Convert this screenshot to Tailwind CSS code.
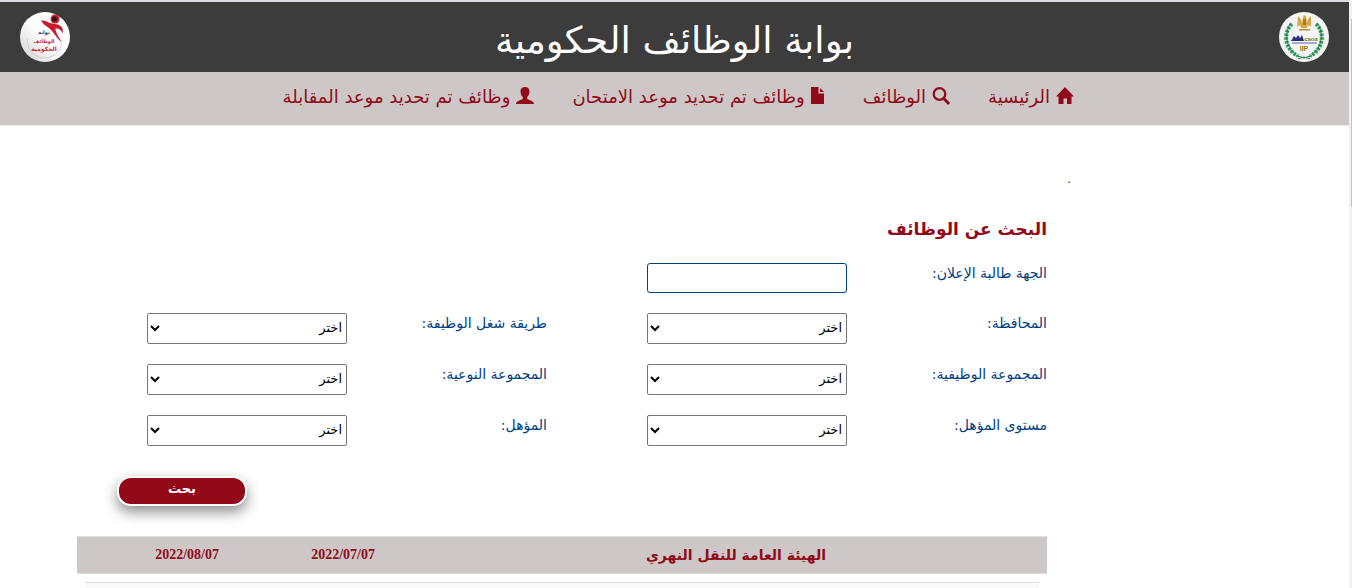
<!DOCTYPE html>
<html lang="ar" dir="rtl">
<head>
  <meta charset="UTF-8" />
  <meta name="viewport" content="width=device-width, initial-scale=1.0" />
  <title>بوابة الوظائف الحكومية</title>

  <!-- Tailwind CSS -->
  <script src="https://cdn.jsdelivr.net/npm/@tailwindcss/browser@4"></script>
</head>
<body class="bg-white font-['DejaVu_Sans',sans-serif] text-[#004080]">
<div dir="ltr" class="flex h-screen overflow-hidden">

<div dir="rtl" class="flex-1 min-w-0 h-screen overflow-hidden border-t-2 border-[#dadcdf]">

  <!-- Header -->
  <header class="flex h-[70px] items-center justify-between bg-[#3c3c3c] px-5">
    <a href="#" aria-label="CAOA">
      <svg class="size-[50px]" viewBox="0 0 50 50">
        <circle cx="25" cy="25" r="25" fill="#f6f5f6"/>
        <g fill="none" stroke="#2f9a5b" stroke-width="4" stroke-dasharray="2.5 1.2">
          <path d="M13 12C4 20 5 37 19 44"/>
          <path d="M37 12C46 20 45 37 31 44"/>
        </g>
        <path d="M12 11C5 20 6 37 20 45M38 11C45 20 44 37 30 45M19 47l6-2 6 2M19 44l6 2 6-2" fill="none" stroke="#178347" stroke-width="1"/>
        <path d="M19 4l3 3 1 4 1-6 1-2 2 1 1 7 1-4 3-3v11l-3-2-1 3h-6l-1-3-3 2z" fill="#d3a84c"/>
        <path d="M24 7h3v6h-3z" fill="#b17c22"/>
        <path d="M20 17h11v1.500H20z" fill="#bd8d36"/>
        <path d="M12 29l3-5 2 2 2-3 2 3 2-3 2 6z" fill="#27307f"/>
        <path d="M13 31h25" stroke="#8e91c1" stroke-width="1.500"/>
        <text x="32" y="29" text-anchor="middle" direction="ltr" font-family="Liberation Sans" font-weight="bold" font-size="6" fill="#817c22">caoa</text>
        <text x="25" y="39" text-anchor="middle" direction="ltr" font-family="Liberation Sans" font-weight="bold" font-size="7" fill="#817c22">IIP</text>
      </svg>
    </a>
    <h1 class="pt-2 text-[37px] leading-[48px] text-white">بوابة الوظائف الحكومية</h1>
    <a href="#" aria-label="بوابة الوظائف الحكومية">
      <svg class="size-[50px]" viewBox="0 0 50 50">
        <defs>
          <linearGradient id="disc" x1="1" y1="0" x2="0" y2="1">
            <stop offset="0.500" stop-color="#ffffff"/>
            <stop offset="1" stop-color="#cfcfcf"/>
          </linearGradient>
        </defs>
        <circle cx="25" cy="25" r="25" fill="url(#disc)"/>
        <path d="M7 27c1 24 31 25 35 4" fill="none" stroke="#c2c2c2" stroke-width="0.700"/>
        <circle cx="35" cy="7" r="4.500" fill="#c81c2c"/>
        <circle cx="34.500" cy="7" r="2.500" fill="#2a1416"/>
        <path d="M21 8.500c4-.500 7 2 11 3 4 .500 8 1 10 4 1 2 1 4 .500 6-1-3-3-5-7-5 0 5 4 9 6.500 14.500-4-4-7-8-10-12-3-4-8-5-11-10.500z" fill="#c81c2c"/>
        <g text-anchor="middle" font-family="DejaVu Sans" font-weight="bold">
          <text x="24" y="22" font-size="5" fill="#333333">بوابة</text>
          <text x="24" y="31" font-size="5" fill="#cf2334">الوظائف</text>
          <text x="24" y="39" font-size="6" fill="#cf2334">الحكومية</text>
        </g>
      </svg>
    </a>
  </header>

  <!-- Nav -->
  <nav class="flex h-[54px] items-start gap-[38px] border-b border-[#eeeeee] bg-[#cdc7c7] pt-[13px] pr-[275px] text-lg leading-6 whitespace-nowrap text-[#920a19]">
    <a href="#" class="flex items-start gap-[6px]">
      <svg class="mt-[2px] h-[18px] w-[18px]" viewBox="0 0 18 18" fill="currentColor"><path d="M9 0l9 9.500h-2.500V17h-4.500v-5.500H7.500V17H2.500V9.500H0L9 0z"/></svg>
      الرئيسية
    </a>
    <a href="#" class="flex items-start gap-[6px]">
      <svg class="mt-[2px] h-[18px] w-[18px]" viewBox="0 0 18 18" fill="none" stroke="currentColor"><circle cx="7.500" cy="7" r="5.800" stroke-width="2.200"/><path d="M11.700 11.500l4.500 4.500" stroke-width="3" stroke-linecap="round"/></svg>
      الوظائف
    </a>
    <a href="#" class="flex items-start gap-[6px]">
      <svg class="mt-[2px] h-[18px] w-[14px]" viewBox="0 0 14 18" fill="currentColor"><path d="M0 0h7.500v6.500H13V17H0z"/><path d="M9 1l4 4H9z"/></svg>
      وظائف تم تحديد موعد الامتحان
    </a>
    <a href="#" class="flex items-start gap-[6px]">
      <svg class="mt-[2px] h-[18px] w-[18px]" viewBox="0 0 18 18" fill="currentColor"><path d="M9 0c3 0 4.600 2 4.500 4.800-.100 2.200-.900 4-2.300 5.200v2c1.500 1 6.800 1.800 6.800 5H0c0-3.200 5.300-4 6.800-5v-2C5.400 8.800 4.600 7 4.500 4.800 4.400 2 6 0 9 0z"/></svg>
      وظائف تم تحديد موعد المقابلة
    </a>
  </nav>

  <!-- Search -->
  <main class="pt-[45px] pr-[302px] pl-[77px]">
    <p class="-mr-6 text-xs leading-4 text-[#920a19]">.</p>

    <h2 class="mt-[28px] text-[17px] leading-7 font-bold text-[#920a19]">البحث عن الوظائف</h2>

    <form class="mt-5">
      <div class="grid grid-cols-[500px_400px] gap-y-5 text-sm">
        <div class="col-span-2 flex">
          <label for="entity" class="w-[200px] leading-5">الجهة طالبة الإعلان:</label>
          <input id="entity" type="text" class="h-[30px] w-[200px] rounded-[3px] border border-[#004080] bg-white px-1" />
        </div>
        <div class="flex">
          <label for="governorate" class="w-[200px] leading-5">المحافظة:</label>
          <select id="governorate" class="h-[31px] w-[200px] rounded-[2px] border border-[#767676] bg-white pb-[2px] text-[13px] text-black"><option>اختر</option></select>
        </div>
        <div class="flex">
          <label for="method" class="w-[200px] leading-5">طريقة شغل الوظيفة:</label>
          <select id="method" class="h-[31px] w-[200px] rounded-[2px] border border-[#767676] bg-white pb-[2px] text-[13px] text-black"><option>اختر</option></select>
        </div>
        <div class="flex">
          <label for="jobGroup" class="w-[200px] leading-5">المجموعة الوظيفية:</label>
          <select id="jobGroup" class="h-[31px] w-[200px] rounded-[2px] border border-[#767676] bg-white pb-[2px] text-[13px] text-black"><option>اختر</option></select>
        </div>
        <div class="flex">
          <label for="typeGroup" class="w-[200px] leading-5">المجموعة النوعية:</label>
          <select id="typeGroup" class="h-[31px] w-[200px] rounded-[2px] border border-[#767676] bg-white pb-[2px] text-[13px] text-black"><option>اختر</option></select>
        </div>
        <div class="flex">
          <label for="level" class="w-[200px] leading-5">مستوى المؤهل:</label>
          <select id="level" class="h-[31px] w-[200px] rounded-[2px] border border-[#767676] bg-white pb-[2px] text-[13px] text-black"><option>اختر</option></select>
        </div>
        <div class="flex">
          <label for="qualification" class="w-[200px] leading-5">المؤهل:</label>
          <select id="qualification" class="h-[31px] w-[200px] rounded-[2px] border border-[#767676] bg-white pb-[2px] text-[13px] text-black"><option>اختر</option></select>
        </div>
      </div>
      <div class="mt-[30px] flex justify-end pl-10">
        <button type="submit" class="h-[30px] w-[130px] rounded-[14px] border-2 border-white bg-[#920a19] pb-1 text-[13px] leading-5 font-bold text-white shadow-[0_6px_14px_rgba(0,0,0,0.45)]">بحث</button>
      </div>
    </form>

    <!-- Results -->
    <section class="mt-[30px]">
      <div class="grid h-[38px] grid-cols-[221px_349px_156px_1fr] items-center border-y border-[#dddddd] bg-[#cdc7c7] text-sm font-bold text-[#920a19]">
        <h3 class="col-start-2">الهيئة العامة للنقل النهري</h3>
        <time class="pr-[102px] font-['Liberation_Serif',serif]">2022/07/07</time>
        <time class="pr-[102px] font-['Liberation_Serif',serif]">2022/08/07</time>
      </div>
      <div class="mx-2 mt-2 h-10 border-t border-[#dddddd] bg-[#f9f9f9]"></div>
    </section>
  </main>
</div>

<!-- Scroll track -->
<div class="flex w-[3px] justify-end bg-[#f1f1f1] pt-[19px]">
  <div class="h-[188px] w-px bg-[#c1c1c1]"></div>
</div>

</div>
</body>
</html>
